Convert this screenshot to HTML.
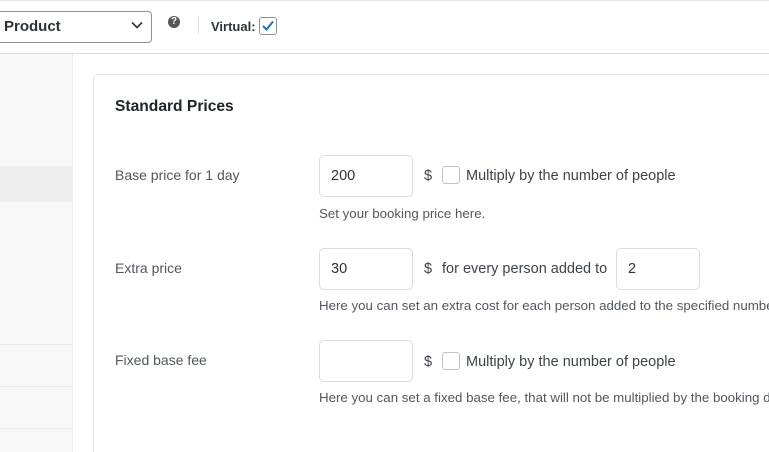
<!DOCTYPE html><html><head><style>
html,body{margin:0;width:769px;height:452px;overflow:hidden}
body{background:#fff;font-family:"Liberation Sans",sans-serif;color:#3c434a}
#w{position:relative;width:769px;height:452px;overflow:hidden}
.a{position:absolute}
.top{left:0;top:0;width:769px;height:53px;border-bottom:1px solid #dcdcde;background:#fff;box-sizing:border-box;height:54px}
.sel{left:0;top:11px;width:152px;height:32px;border:1px solid #8c8f94;border-left:none;border-radius:0 4px 4px 0;background:#fff;box-sizing:border-box}
.side{left:0;top:54px;width:73px;height:398px;background:#f8f8f8;border-right:1px solid #eee;box-sizing:border-box}
.panel{left:93px;top:74px;width:690px;height:390px;border:1px solid #e2e4e7;border-radius:5px;background:#fff;box-sizing:border-box}
.inp{border:1px solid #dcdcde;border-radius:5px;background:#fff;height:42px;font-size:14.5px;color:#2c3338;line-height:40px;padding-left:11px;box-sizing:border-box}
.lbl{font-size:14px;color:#50575e;white-space:nowrap}
.t{font-size:14.5px;color:#3c434a;white-space:nowrap}
.help{font-size:13.3px;color:#50575e;white-space:nowrap}
.cb{width:18px;height:18px;border:1px solid #c3c4c7;border-radius:3px;background:#fff;box-sizing:border-box}
</style></head><body><div id="w">
<div class="a top"></div>
<div class="a" style="left:0;top:0;width:769px;height:1px;background:#e5e5e5"></div>
<div class="a sel"></div>
<div class="a" style="left:4px;top:18px;font-size:15px;font-weight:bold;color:#2c3338">Product</div>
<svg class="a" style="left:131px;top:21px" width="12" height="8"><path d="M1 1.5L6 6.5L11 1.5" stroke="#2c3338" stroke-width="1.6" fill="none"/></svg>
<div class="a" style="left:168px;top:16px;width:12px;height:12px;border-radius:50%;background:#555;color:#fff;font-size:10px;font-weight:bold;text-align:center;line-height:12px">?</div>
<div class="a" style="left:198px;top:16px;width:1px;height:18px;background:#e0e0e0"></div>
<div class="a" style="left:211px;top:19px;font-size:13px;font-weight:bold;color:#2c3338">Virtual:</div>
<div class="a cb" style="left:259px;top:17px;border-color:#8c8f94"></div>
<svg class="a" style="left:261px;top:19px" width="14" height="14"><path d="M2 7L5.5 10.5L12 2.5" stroke="#2271b1" stroke-width="2" fill="none"/></svg>
<div class="a side"></div>
<div class="a" style="left:0;top:166px;width:72px;height:36px;background:#eeeeee"></div>
<div class="a" style="left:0;top:344px;width:72px;height:1px;background:#e8e8e8"></div>
<div class="a" style="left:0;top:386px;width:72px;height:1px;background:#e8e8e8"></div>
<div class="a" style="left:0;top:428px;width:72px;height:1px;background:#e8e8e8"></div>
<div class="a panel"></div>
<div class="a" style="left:115px;top:98px;font-size:15.6px;font-weight:bold;color:#1d2327">Standard Prices</div>
<div class="a lbl" style="left:115px;top:167px">Base price for 1 day</div>
<div class="a inp" style="left:319px;top:155px;width:94px">200</div>
<div class="a t" style="left:424px;top:168px">$</div>
<div class="a cb" style="left:442px;top:166px"></div>
<div class="a t" style="left:466px;top:168px">Multiply by the number of people</div>
<div class="a help" style="left:319px;top:206px">Set your booking price here.</div>
<div class="a lbl" style="left:115px;top:260px">Extra price</div>
<div class="a inp" style="left:319px;top:248px;width:94px">30</div>
<div class="a t" style="left:424px;top:261px">$</div>
<div class="a t" style="left:442px;top:261px">for every person added to</div>
<div class="a inp" style="left:616px;top:248px;width:84px">2</div>
<div class="a help" style="left:319px;top:298px;width:450px;overflow:hidden">Here you can set an extra cost for each person added to the specified number</div>
<div class="a lbl" style="left:115px;top:352px">Fixed base fee</div>
<div class="a inp" style="left:319px;top:340px;width:94px"></div>
<div class="a t" style="left:424px;top:354px">$</div>
<div class="a cb" style="left:442px;top:352px"></div>
<div class="a t" style="left:466px;top:354px">Multiply by the number of people</div>
<div class="a help" style="left:319px;top:390px;width:450px;overflow:hidden">Here you can set a fixed base fee, that will not be multiplied by the booking duration</div>
</div></body></html>
